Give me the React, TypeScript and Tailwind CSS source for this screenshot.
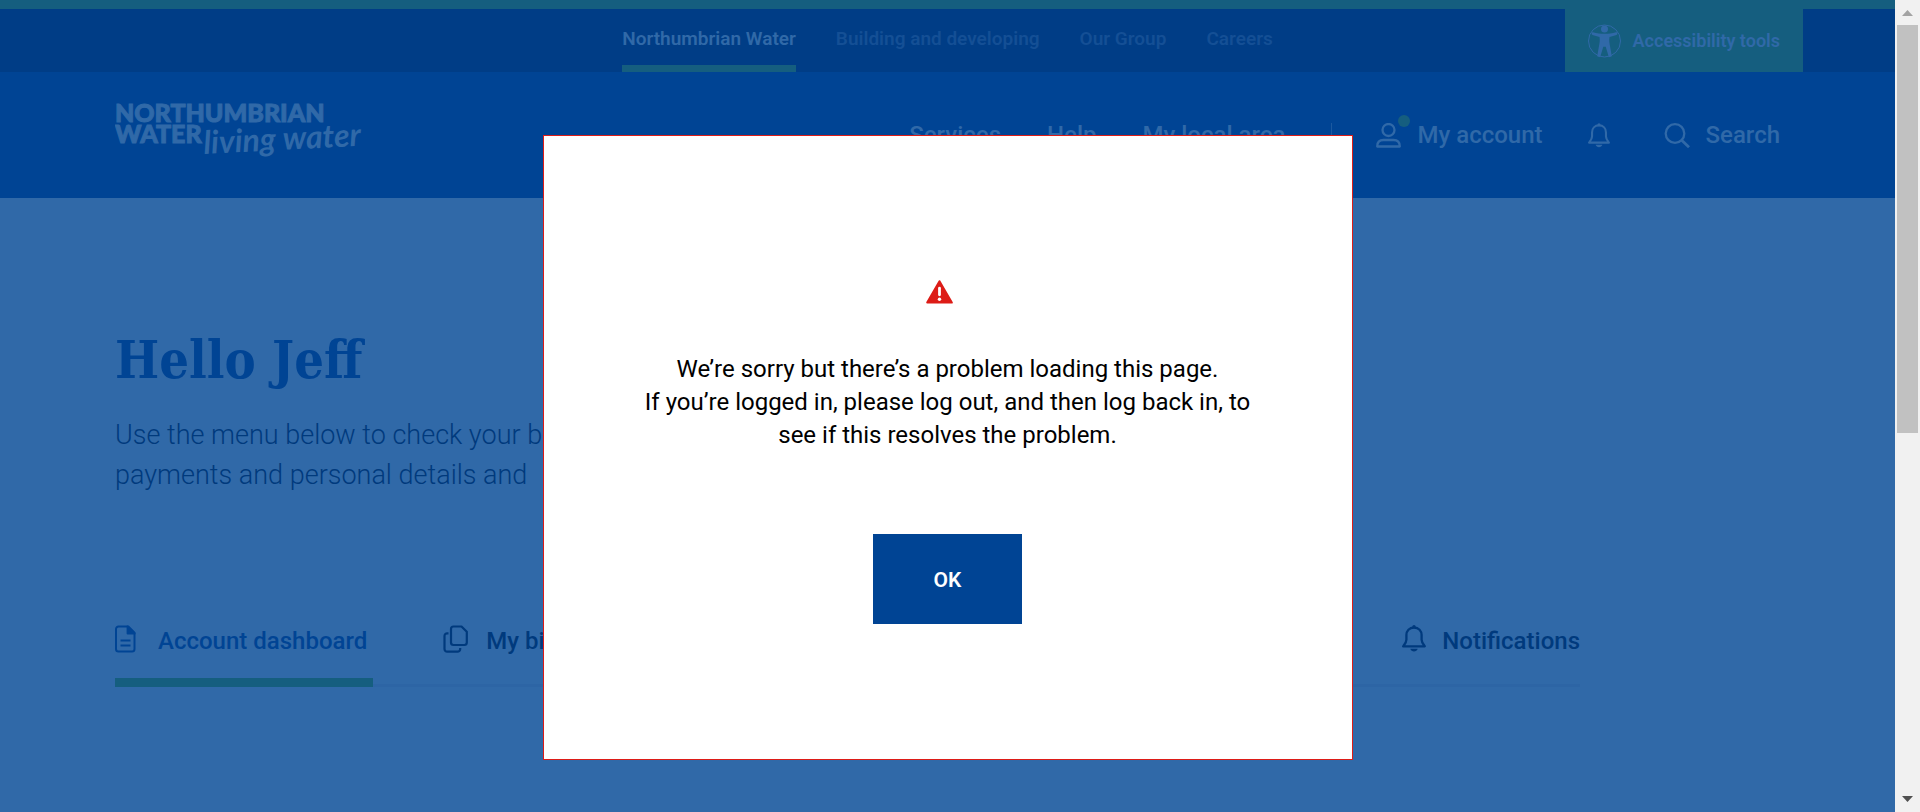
import type { ReactNode } from 'react';

function Logo() {
  return (
    <svg width="250" height="76" viewBox="0 0 250 76" className="block" role="img" aria-label="Northumbrian Water living water">
      <g className="fill-[#3069a8] font-['Lato',sans-serif]">
        <text x="0" y="25" className="text-[25px] font-black" stroke="#3069a8" strokeWidth="1">NORTHUMBRIAN</text>
        <text x="0" y="46" className="text-[25px] font-black" stroke="#3069a8" strokeWidth="1">WATER</text>
        <text x="89" y="57" transform="rotate(-3 89 57)" className="text-[32px] font-bold italic">living water</text>
      </g>
    </svg>
  );
}

function PersonIcon() {
  return (
    <svg width="25" height="25" viewBox="0 0 25 25" fill="none" stroke="currentColor" strokeWidth="2.3" strokeLinejoin="round">
      <circle cx="12.5" cy="7" r="6" />
      <path d="M1.200 23.500c0-4 2.300-6.500 6.300-6.500h10c4 0 6.300 2.500 6.300 6.500z" />
    </svg>
  );
}

function BellIcon({ className }: { className: string }) {
  return (
    <svg viewBox="0 0 24 27" fill="none" stroke="currentColor" strokeWidth="2.3" strokeLinejoin="round" className={className}>
      <path d="M12 2.500c-4.700 0-7.600 3.400-7.600 7.600v4.600c0 2.400-1.200 3.800-3.200 6.600h21.600c-2-2.800-3.200-4.200-3.200-6.600v-4.600c0-4.200-2.900-7.600-7.600-7.600z" />
      <path d="M8.300 23.700h7.400c-1 3.600-6.400 3.600-7.400 0z" fill="currentColor" stroke="none" />
      <circle cx="12" cy="1.800" r="1.700" fill="currentColor" stroke="none" />
    </svg>
  );
}

function SearchIcon() {
  return (
    <svg width="26" height="25" viewBox="0 0 26 25" fill="none" stroke="currentColor" strokeWidth="2.3">
      <circle cx="11" cy="10.500" r="9.300" />
      <path d="M17.700 17.200l7.300 7" strokeWidth="2.800" />
    </svg>
  );
}

function DocumentIcon() {
  return (
    <svg width="21" height="28" viewBox="0 0 21 28" fill="none" stroke="currentColor" strokeWidth="2" strokeLinejoin="round">
      <path d="M3.500 1.500h9.800l6.200 6.200v16.300a2.500 2.500 0 0 1-2.500 2.500H3.500A2.500 2.500 0 0 1 1 24V4a2.500 2.500 0 0 1 2.500-2.500z" />
      <path d="M12.600 1.500v7h7z" fill="currentColor" />
      <path d="M5.500 15.500h10M5.500 20.500h10" />
    </svg>
  );
}

function CopyIcon() {
  return (
    <svg width="25" height="28" viewBox="0 0 25 28" fill="none" stroke="currentColor" strokeWidth="2.200" strokeLinejoin="round">
      <path d="M10.500 1.500h8l5.300 5.300v10.700a2.500 2.500 0 0 1-2.500 2.500H10.500A2.500 2.500 0 0 1 8 17.500V4a2.500 2.500 0 0 1 2.500-2.500z" />
      <path d="M5.500 8.300H4.200A2.700 2.700 0 0 0 1.500 11v13a2.700 2.700 0 0 0 2.700 2.700h10.300a2.700 2.700 0 0 0 2.700-2.700v-1" />
    </svg>
  );
}

function AccessibilityIcon() {
  return (
    <svg width="33" height="34" viewBox="0 0 33 34" fill="currentColor">
      <circle cx="16.500" cy="17" r="16" fill="none" stroke="currentColor" strokeWidth="1" />
      <circle cx="16.500" cy="5" r="3.500" />
      <path d="M5 8.200c7.500 2.200 15.500 2.200 23 0 1.500-.3 2 2.200.500 2.700l-7 2.200c-.6 3.500-.1 6.300.6 9.300l1.700 9.900-2.900.9-3.200-10.400h-2.400l-3.200 10.400-2.900-.9 1.700-9.900c.7-3 1.200-5.800.6-9.300l-7-2.200c-1.500-.5-1-3 .5-2.700z" />
    </svg>
  );
}

function WarningIcon() {
  return (
    <svg width="27" height="24" viewBox="0 0 27 24" className="block text-[#dd1c17]">
      <path d="M13.500 1.200L25.800 22.600H1.200z" fill="currentColor" stroke="currentColor" strokeWidth="2" strokeLinejoin="round" />
      <path d="M13.500 8.200v6.600" stroke="#fff" strokeWidth="2.800" strokeLinecap="round" />
      <circle cx="13.500" cy="19.200" r="1.700" fill="#fff" />
    </svg>
  );
}

function SiteLink({ children, active = false }: { children: ReactNode; active?: boolean }) {
  return (
    <a
      href="#"
      className={
        active
          ? 'border-b-[7px] border-[#155e7f] pb-2.5 text-[#3069a8]'
          : 'border-b-[7px] border-transparent pb-2.5 text-[#144f95]'
      }
    >
      {children}
    </a>
  );
}

function Header() {
  return (
    <header>
      <div className="h-[9px] bg-[#155e7f]" />
      <div className="grid h-[63px] grid-cols-[1fr_auto_1fr] bg-[#003d86]">
        <nav aria-label="Sites" className="col-start-2 flex h-full items-end gap-10 text-[19px] leading-8 font-semibold">
          <SiteLink active>Northumbrian Water</SiteLink>
          <SiteLink>Building and developing</SiteLink>
          <SiteLink>Our Group</SiteLink>
          <SiteLink>Careers</SiteLink>
        </nav>
        <button
          type="button"
          className="mr-[92px] flex items-center gap-3 justify-self-end bg-[#155e7f] px-[23px] text-lg font-semibold text-[#3069a8]"
        >
          <AccessibilityIcon />
          Accessibility tools
        </button>
      </div>
      <div className="flex h-[126px] items-center justify-between bg-[#004494] px-[115px] text-2xl font-medium text-[#3069a8]">
        <a href="#">
          <Logo />
        </a>
        <div className="flex items-center">
          <nav aria-label="Main" className="flex gap-[46px]">
            <a href="#">Services</a>
            <a href="#">Help</a>
            <a href="#">My local area</a>
          </nav>
          <div className="mr-[44px] ml-[45px] h-6 w-px bg-[#1c599f]" />
          <a href="#" className="flex items-center gap-[17px]">
            <span className="relative">
              <PersonIcon />
              <span className="absolute -top-2 left-[22px] size-3 rounded-full bg-[#155e7f]" />
            </span>
            My account
          </a>
          <button type="button" aria-label="Notifications" className="mr-[54px] ml-[45px]">
            <BellIcon className="h-[25px] w-[22px]" />
          </button>
          <button type="button" className="flex items-center gap-4">
            <SearchIcon />
            Search
          </button>
        </div>
      </div>
    </header>
  );
}

function AccountPage() {
  return (
    <main className="grow px-[115px] pt-[129px]">
      <h1 className="font-['DejaVu_Serif_Condensed','DejaVu_Serif',serif] text-[52px] leading-[66px] font-bold text-[#004494]">
        Hello Jeff
      </h1>
      <p className="mt-[22px] text-[27px] leading-10 font-light text-[#003a7d]">
        Use the menu below to check your bills,
        <br />
        payments and personal details and
      </p>
      <nav
        aria-label="Account"
        className="mt-[130px] mr-[200px] flex items-start justify-between border-b-[3px] border-[#2d65a5] text-2xl leading-9 font-medium text-[#003a7d]"
      >
        <div className="-mb-[3px] flex gap-[70px]">
          <a href="#" aria-current="page" className="flex gap-[22px] border-b-[9px] border-[#155e7f] pr-1.5 pb-[19px] text-[#004494]">
            <DocumentIcon />
            <span className="-mt-0.5">Account dashboard</span>
          </a>
          <a href="#" className="flex gap-[18px]">
            <CopyIcon />
            <span className="-mt-0.5">My bills</span>
          </a>
        </div>
        <a href="#" className="flex gap-4">
          <BellIcon className="h-[27px] w-6" />
          <span className="-mt-0.5">Notifications</span>
        </a>
      </nav>
    </main>
  );
}

function ErrorDialog() {
  return (
    <div className="absolute inset-x-0 top-[135px] flex justify-center">
      <div
        role="alertdialog"
        aria-modal="true"
        aria-labelledby="error-text"
        className="flex w-[810px] max-w-full flex-col items-center border border-[#dd1c17] bg-white px-[90px] pt-[144px] pb-[135px] text-black"
      >
        <div className="pr-4">
          <WarningIcon />
        </div>
        <p id="error-text" className="mt-[49px] text-center text-2xl leading-[33px]">
          We’re sorry but there’s a problem loading this page.
          <br />
          If you’re logged in, please log out, and then log back in, to
          <br />
          see if this resolves the problem.
        </p>
        <button type="button" className="mt-[82px] h-[90px] w-[149px] bg-[#004494] pt-[3px] text-[21px] font-semibold text-white">
          OK
        </button>
      </div>
    </div>
  );
}

function ScrollTrack() {
  return (
    <div aria-hidden="true" className="flex w-[25px] shrink-0 flex-col items-center bg-[#f1f1f1] py-2.5">
      <svg width="11" height="6" viewBox="0 0 11 6" className="mr-px fill-[#a3a3a3]">
        <path d="M5.500 0L11 6H0z" />
      </svg>
      <div className="mt-[9px] mr-px h-[408px] w-[21px] bg-[#c1c1c1]" />
      <svg width="11" height="6" viewBox="0 0 11 6" className="mt-auto mr-px fill-[#505050]">
        <path d="M0 0h11L5.500 6z" />
      </svg>
    </div>
  );
}

export default function App() {
  return (
    <div className="flex h-screen overflow-hidden bg-[#3069a8] font-['Roboto',sans-serif]">
      <div className="relative flex min-w-0 grow flex-col">
        <Header />
        <AccountPage />
        <ErrorDialog />
      </div>
      <ScrollTrack />
    </div>
  );
}
